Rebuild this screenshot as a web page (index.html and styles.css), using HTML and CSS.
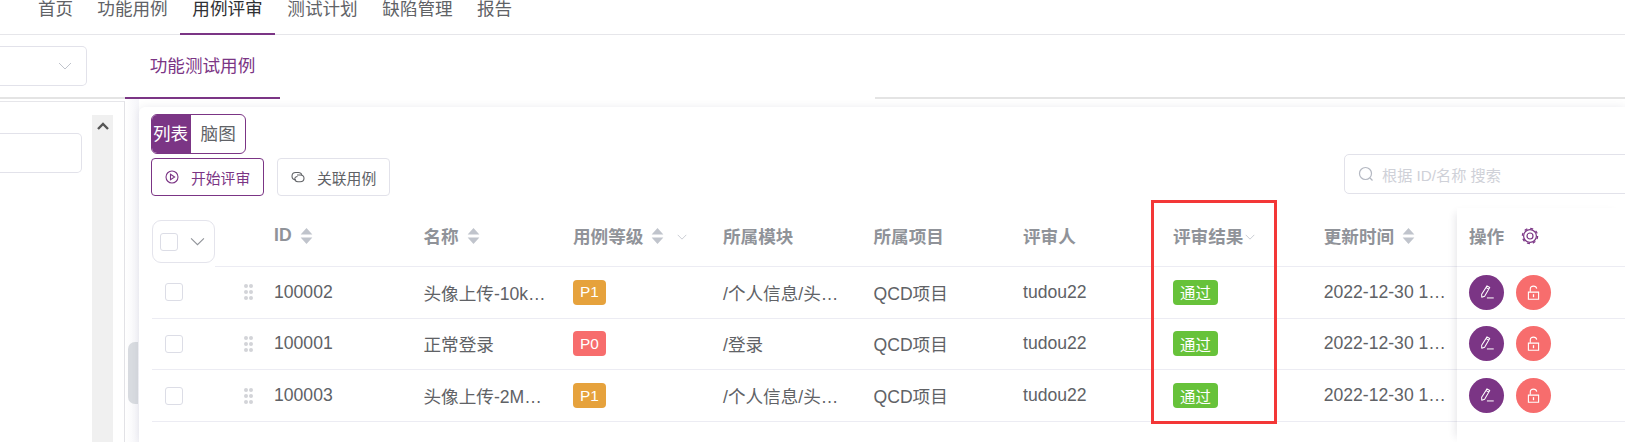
FILE: index.html
```html
<!DOCTYPE html>
<html lang="zh">
<head>
<meta charset="utf-8">
<title>用例评审</title>
<link rel="stylesheet" href="styles.css">
</head>
<body>
<svg class="defs" width="0" height="0" aria-hidden="true">
  <symbol id="sort" viewBox="0 0 12 15"><path d="M6 0l5.500 6H.5zM6 15L.5 9h11z" fill="currentColor"/></symbol>
  <symbol id="chev" viewBox="0 0 14 8"><path d="M1 1l6 6 6-6" fill="none" stroke="currentColor" stroke-width="1"/></symbol>
  <symbol id="pen" viewBox="0 0 20 20"><path d="M10.600 2.200l3.200 1.900-6 10.200-3.400 1.200-.1-3.400zM9.500 4.200l3.200 1.900" fill="none" stroke="currentColor" stroke-width="1.200" stroke-linejoin="round"/><path d="M10.500 16.400h8" stroke="currentColor" stroke-width="1.200"/></symbol>
  <symbol id="lock" viewBox="0 0 20 20"><path d="M4 9.500h12v8.500H4z" fill="none" stroke="currentColor" stroke-width="1.300"/><path d="M6.200 9V6C6.200 3.800 8 2.500 10 2.500s3.500 1.100 3.800 3" fill="none" stroke="currentColor" stroke-width="1.300"/><path d="M10 12v3.500" stroke="currentColor" stroke-width="1.500"/></symbol>
</svg>

<nav class="nav">
  <a class="nav-item">首页</a>
  <a class="nav-item">功能用例</a>
  <a class="nav-item is-active">用例评审</a>
  <a class="nav-item">测试计划</a>
  <a class="nav-item">缺陷管理</a>
  <a class="nav-item">报告</a>
</nav>

<div class="subbar">
  <div class="subbar-left">
    <div class="project-select"><svg class="select-chev"><use href="#chev"/></svg></div>
  </div>
  <div class="tab">功能测试用例</div>
  <div class="subbar-gap"></div>
  <div class="subbar-line"></div>
</div>

<div class="content">
  <aside class="side">
    <div class="side-box">
      <div class="side-input"></div>
      <div class="side-scroll">
        <svg class="scroll-arrow" viewBox="0 0 12 8"><path d="M1 7l5-5 5 5" fill="none" stroke="currentColor" stroke-width="2.400"/></svg>
      </div>
    </div>
  </aside>
  <div class="gutter"><div class="handle"></div></div>

  <main class="card">
    <div class="switch">
      <span class="switch-seg is-on">列表</span>
      <span class="switch-seg">脑图</span>
    </div>
    <div class="toolbar">
      <button class="btn btn-primary">
        <svg class="btn-icon" viewBox="0 0 14 14"><circle cx="7" cy="7" r="6" fill="none" stroke="currentColor" stroke-width="1.100"/><path d="M5.500 4.300L9.600 7l-4.100 2.700z" fill="none" stroke="currentColor" stroke-width="1.100"/></svg>
        开始评审
      </button>
      <button class="btn">
        <svg class="btn-icon" viewBox="0 0 14 14"><path d="M4.800 9.800C2.600 9.800 1 8.400 1 6.300S2.600 2.500 4.800 2.500h2.600c1.700 0 3 1 3.400 2.400" fill="none" stroke="currentColor" stroke-width="1.100"/><path d="M6 5h3.200C11.400 5 13 6.500 13 8.300s-1.600 3.400-3.800 3.400H6.800C5 11.700 3.800 10.300 3.800 8.800 3.800 7.400 5 6.500 6.500 6.500" fill="none" stroke="currentColor" stroke-width="1.100"/></svg>
        关联用例
      </button>
      <div class="search">
        <svg class="search-icon" viewBox="0 0 16 16"><circle cx="7.500" cy="7.500" r="6" fill="none" stroke="currentColor" stroke-width="1.200"/><path d="M12 12l2.500 2.500" stroke="currentColor" stroke-width="1.200"/></svg>
        <span class="search-text">根据 ID/名称 搜索</span>
      </div>
    </div>

    <div class="table">
      <div class="table-main">
        <div class="row row-head">
          <div class="cell cell-select">
            <div class="select-all"><span class="check"></span><svg class="select-all-chev"><use href="#chev"/></svg></div>
            <div class="head-rule"></div>
          </div>
          <div class="cell"></div>
          <div class="cell">ID<svg class="sort"><use href="#sort"/></svg></div>
          <div class="cell">名称<svg class="sort"><use href="#sort"/></svg></div>
          <div class="cell">用例等级<svg class="sort"><use href="#sort"/></svg><svg class="filter"><use href="#chev"/></svg></div>
          <div class="cell">所属模块</div>
          <div class="cell">所属项目</div>
          <div class="cell">评审人</div>
          <div class="cell">评审结果<svg class="filter filter-tight"><use href="#chev"/></svg></div>
          <div class="cell">更新时间<svg class="sort"><use href="#sort"/></svg></div>
        </div>

        <div class="row">
          <div class="cell"><span class="check check-row"></span></div>
          <div class="cell"><span class="dots"><i></i><i></i><i></i><i></i><i></i><i></i></span></div>
          <div class="cell">100002</div>
          <div class="cell">头像上传-10k…</div>
          <div class="cell"><span class="tag tag-p1">P1</span></div>
          <div class="cell">/个人信息/头…</div>
          <div class="cell">QCD项目</div>
          <div class="cell">tudou22</div>
          <div class="cell"><span class="tag tag-pass">通过</span></div>
          <div class="cell">2022-12-30 1…</div>
        </div>

        <div class="row">
          <div class="cell"><span class="check check-row"></span></div>
          <div class="cell"><span class="dots"><i></i><i></i><i></i><i></i><i></i><i></i></span></div>
          <div class="cell">100001</div>
          <div class="cell">正常登录</div>
          <div class="cell"><span class="tag tag-p0">P0</span></div>
          <div class="cell">/登录</div>
          <div class="cell">QCD项目</div>
          <div class="cell">tudou22</div>
          <div class="cell"><span class="tag tag-pass">通过</span></div>
          <div class="cell">2022-12-30 1…</div>
        </div>

        <div class="row">
          <div class="cell"><span class="check check-row"></span></div>
          <div class="cell"><span class="dots"><i></i><i></i><i></i><i></i><i></i><i></i></span></div>
          <div class="cell">100003</div>
          <div class="cell">头像上传-2M…</div>
          <div class="cell"><span class="tag tag-p1">P1</span></div>
          <div class="cell">/个人信息/头…</div>
          <div class="cell">QCD项目</div>
          <div class="cell">tudou22</div>
          <div class="cell"><span class="tag tag-pass">通过</span></div>
          <div class="cell">2022-12-30 1…</div>
        </div>
      </div>

      <div class="ops">
        <div class="ops-head">操作
          <svg class="gear" viewBox="0 0 18 18"><circle cx="9" cy="9" r="6.400" fill="none" stroke="currentColor" stroke-width="1.200"/><circle cx="9" cy="9" r="7.600" fill="none" stroke="currentColor" stroke-width="1.300" stroke-dasharray="3 2.970"/><circle cx="9" cy="9" r="3" fill="none" stroke="currentColor" stroke-width="1.200"/></svg>
        </div>
        <div class="ops-row"><span class="round round-edit"><svg class="round-icon"><use href="#pen"/></svg></span><span class="round round-lock"><svg class="round-icon"><use href="#lock"/></svg></span></div>
        <div class="ops-row"><span class="round round-edit"><svg class="round-icon"><use href="#pen"/></svg></span><span class="round round-lock"><svg class="round-icon"><use href="#lock"/></svg></span></div>
        <div class="ops-row"><span class="round round-edit"><svg class="round-icon"><use href="#pen"/></svg></span><span class="round round-lock"><svg class="round-icon"><use href="#lock"/></svg></span></div>
      </div>
    </div>
  </main>
</div>

<div class="callout"></div>
</body>
</html>
```

FILE: styles.css
```css
* { box-sizing: border-box; }

html, body {
  margin: 0;
  height: 442px;
  overflow: hidden;
  background: #fff;
}

body {
  width: 1625px;
  position: relative;
  font-family: "Liberation Sans", "Noto Sans CJK SC", sans-serif;
  font-size: 17.6px;
  color: #606266;
}

.defs { position: absolute; }

/* top navigation */
.nav {
  display: flex;
  height: 35px;
  padding-left: 26px;
  border-bottom: 1px solid #e6e6ea;
}

.nav-item {
  width: 95px;
  height: 34.5px;
  text-align: center;
  line-height: 18px;
}
.nav-item:first-child,
.nav-item:last-child { width: 59px; }
.nav-item.is-active {
  color: #303133;
  border-bottom: 2px solid #7b3585;
}

/* sub bar */
.subbar {
  display: flex;
  height: 64px;
}
.subbar-left {
  width: 125px;
  padding-top: 11px;
  border-bottom: 2px solid #e4e4e4;
}
.project-select {
  display: flex;
  align-items: center;
  justify-content: flex-end;
  width: 87px;
  height: 40px;
  padding-right: 14px;
  border: 1px solid #e2e2ea;
  border-left: 0;
  border-radius: 0 5px 5px 0;
}
.select-chev { width: 14px; height: 8px; color: #c0c4cc; }

.tab {
  width: 155px;
  padding-top: 20px;
  text-align: center;
  line-height: 22px;
  color: #7b3585;
  border-bottom: 2px solid #7b3585;
}
.subbar-gap { width: 595px; }
.subbar-line { flex: 1; border-bottom: 2px solid #e4e4e4; }

/* content */
.content {
  display: flex;
  height: 343px;
}

.side {
  width: 125px;
  padding-top: 2px;
}
.side-box {
  display: flex;
  align-items: flex-start;
  height: 100%;
  padding-top: 13px;
  border-top: 1px solid #e6e6ea;
  border-right: 1px solid #e2e2e6;
}
.side-input {
  width: 81.5px;
  height: 40px;
  margin-top: 18px;
  border: 1px solid #e2e2ea;
  border-left: 0;
  border-radius: 0 5px 5px 0;
}
.side-scroll {
  display: flex;
  justify-content: center;
  width: 21px;
  height: 100%;
  margin-left: 10.5px;
  padding-top: 7px;
  background: #f0f0f0;
  color: #555;
}
.scroll-arrow { width: 12px; height: 8px; }

.gutter {
  width: 14px;
  padding: 243px 1px 0 3px;
  background: linear-gradient(to right, #fff, #f5f5f9);
}
.handle {
  height: 62px;
  background: #d8dbe0;
  border-radius: 7px 0 0 7px;
}

.card {
  flex: 1;
  min-width: 0;
  margin-top: 8px;
  padding: 7px 0 0 12px;
  background: #fff;
  border-radius: 6px 0 0 0;
  box-shadow: 0 0 8px rgba(30, 30, 70, .08);
}

/* list / mindmap switch */
.switch {
  display: flex;
  width: 95px;
  height: 40px;
  border: 1px solid #7b3585;
  border-radius: 6px;
  overflow: hidden;
  line-height: 38px;
}
.switch-seg {
  width: 55px;
  padding-left: 10px;
}
.switch-seg.is-on {
  width: 39px;
  padding-left: 1px;
  background: #7b3585;
  color: #fff;
}

/* toolbar */
.toolbar {
  display: flex;
  align-items: flex-start;
  height: 42px;
}
.btn {
  display: flex;
  align-items: center;
  flex: none;
  gap: 12px;
  width: 113px;
  height: 38px;
  margin: 4px 13px 0 0;
  padding: 0 0 0 13px;
  background: #fff;
  border: 1px solid #e2e2ea;
  border-radius: 4px;
  font: inherit;
  font-size: 14.8px;
  white-space: nowrap;
  color: #606266;
}
.btn-primary {
  border-color: #7b3585;
  color: #7b3585;
}
.btn-icon { width: 14px; height: 14px; flex: none; }

.search {
  display: flex;
  align-items: center;
  flex: none;
  width: 320px;
  height: 40px;
  margin-left: 941px;
  padding-left: 13px;
  border: 1px solid #e2e2ea;
  border-radius: 5px;
  color: #cfd1d8;
}
.search-icon { width: 16px; height: 16px; color: #b4b8c2; }
.search-text { margin-left: 8px; font-size: 15.2px; white-space: nowrap; }

/* table */
.table {
  display: flex;
  margin: 12px 0 0 1px;
}
.table-main { width: 1305px; flex: none; }

.row {
  display: grid;
  grid-template-columns: 91px 31px 149.5px 149.5px 150px 150.5px 149.5px 150px 150.7px 133.3px;
  height: 51.7px;
  border-bottom: 1px solid #ececf3;
}
.row-head {
  height: 58.9px;
  font-weight: 700;
  color: #909399;
  border-bottom: 0;
}
.row-head .cell { border-bottom: 1px solid #ececf3; padding-bottom: 2px; }
.row-head .cell.cell-select { border-bottom: 0; padding-bottom: 0; align-items: stretch; }

.cell {
  display: flex;
  align-items: center;
  min-width: 0;
  white-space: nowrap;
}

.select-all {
  display: flex;
  align-items: center;
  flex: none;
  width: 63px;
  height: 43px;
  margin-top: 12px;
  padding-left: 7px;
  border: 1px solid #e4e4ec;
  border-radius: 9px;
}
.head-rule {
  flex: 1;
  align-self: flex-end;
  height: 1px;
  background: #ececf3;
}
.select-all-chev { width: 15px; height: 9px; margin-left: 12px; color: #909399; }

.check {
  display: block;
  flex: none;
  width: 18px;
  height: 18px;
  background: #fff;
  border: 1px solid #dcdde6;
  border-radius: 3px;
}
.check-row { margin-left: 13px; }

.dots {
  display: grid;
  grid-template-columns: 4px 4px;
  gap: 2px 1.5px;
  margin-left: 0.5px;
}
.dots i {
  width: 4px;
  height: 4px;
  border-radius: 50%;
  background: #d3d4d8;
}

.sort { width: 13px; height: 16px; margin-left: 8px; color: #c0c4cc; }
.filter { width: 10px; height: 6px; margin: 3px 0 0 13px; color: #b6bac2; }
.filter-tight { margin-left: 2px; }

.tag {
  display: flex;
  align-items: center;
  justify-content: center;
  height: 25px;
  border-radius: 4px;
  color: #fff;
  font-size: 15.4px;
}
.tag-p1 { width: 33px; background: #e6a23c; }
.tag-p0 { width: 33px; background: #f76d6d; }
.tag-pass { width: 45px; background: #67c23a; }

/* fixed operation column */
.ops {
  flex: 1;
  min-height: 234px;
  background: #fff;
  box-shadow: -6px 0 8px -5px rgba(30, 30, 60, .12);
}
.ops-head {
  display: flex;
  align-items: center;
  height: 58.9px;
  padding: 0 0 2px 12px;
  font-weight: 700;
  color: #909399;
  border-bottom: 1px solid #ececf3;
}
.gear { width: 18px; height: 18px; margin-left: 17px; color: #7b3585; }
.ops-row {
  display: flex;
  align-items: center;
  gap: 12px;
  height: 51.7px;
  padding-left: 12px;
  border-bottom: 1px solid #ececf3;
}
.round {
  display: flex;
  align-items: center;
  justify-content: center;
  width: 35px;
  height: 35px;
  border-radius: 50%;
  color: #fff;
}
.round-edit { background: #7b3585; }
.round-lock { background: #f76d6d; }
.round-icon { width: 17px; height: 17px; }

/* annotation drawn over the screenshot */
.callout {
  position: absolute;
  left: 1151px;
  top: 200px;
  width: 126px;
  height: 224px;
  border: 3px solid #f33737;
}
```
